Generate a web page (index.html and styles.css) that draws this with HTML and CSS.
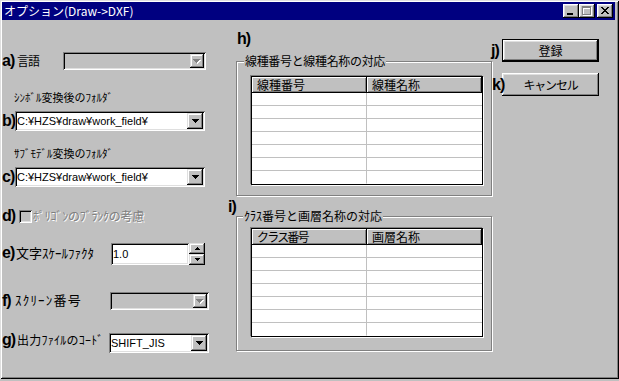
FILE: index.html
```html
<!DOCTYPE html>
<html lang="ja">
<head>
    <meta charset="UTF-8">
    <meta name="viewport" content="width=device-width, initial-scale=1.0">
    <title>オプション(Draw-&gt;DXF)</title>
    <link rel="stylesheet" href="styles.css">
</head>
<body>
    <div class="window">
        <div class="titlebar">
            <span class="title">オプション(Draw-&gt;DXF)</span>
            <div class="caption-buttons">
                <button class="cap-btn" title="最小化">
                    <svg width="16" height="14" viewBox="0 0 16 14"><rect x="4" y="9" width="6" height="2" fill="#000"/></svg>
                </button>
                <button class="cap-btn" title="最大化">
                    <svg width="16" height="14" viewBox="0 0 16 14">
                        <path d="M4 3h9v9h-9z M5 5v6h7v-6z" fill="#fff" fill-rule="evenodd"/>
                        <path d="M3 2h9v9h-9z M4 4v6h7v-6z" fill="#808080" fill-rule="evenodd"/>
                    </svg>
                </button>
                <button class="cap-btn close" title="閉じる">
                    <svg width="16" height="14" viewBox="0 0 16 14">
                        <g fill="#000" transform="translate(4 3)">
                            <rect x="0" y="0" width="2" height="1"/><rect x="6" y="0" width="2" height="1"/>
                            <rect x="1" y="1" width="2" height="1"/><rect x="5" y="1" width="2" height="1"/>
                            <rect x="2" y="2" width="4" height="1"/>
                            <rect x="3" y="3" width="2" height="1"/>
                            <rect x="2" y="4" width="4" height="1"/>
                            <rect x="1" y="5" width="2" height="1"/><rect x="5" y="5" width="2" height="1"/>
                            <rect x="0" y="6" width="2" height="1"/><rect x="6" y="6" width="2" height="1"/>
                        </g>
                    </svg>
                </button>
            </div>
        </div>

        <div class="dialog">
            <!-- left: settings -->
            <div class="col-left">
                <div class="row row-lang">
                    <span class="tag tag-a">a)</span>
                    <span class="label lbl-lang">言語</span>
                    <div class="combo small disabled combo-lang">
                        <span class="combo-text"></span>
                        <span class="drop"><svg width="8" height="5" viewBox="0 0 8 5"><path d="M1 1h7v1h-1v1h-1v1h-1v1h-1v-1h-1v-1h-1v-1h-1z" fill="#fff"/><path d="M0 0h7v1h-1v1h-1v1h-1v1h-1v-1h-1v-1h-1v-1h-1z" fill="#808080"/></svg></span>
                    </div>
                </div>

                <div class="caption caption-symbol">ｼﾝﾎﾞﾙ変換後のﾌｫﾙﾀﾞ</div>
                <div class="row row-symbol">
                    <span class="tag tag-b">b)</span>
                    <div class="combo combo-folder">
                        <span class="combo-text">C:¥HZS¥draw¥work_field¥</span>
                        <span class="drop"><svg width="7" height="4" viewBox="0 0 7 4"><path d="M0 0h7v1h-1v1h-1v1h-1v1h-1v-1h-1v-1h-1v-1h-1z" fill="#000"/></svg></span>
                    </div>
                </div>

                <div class="caption caption-submodel">ｻﾌﾞﾓﾃﾞﾙ変換のﾌｫﾙﾀﾞ</div>
                <div class="row row-submodel">
                    <span class="tag tag-b">c)</span>
                    <div class="combo combo-folder">
                        <span class="combo-text">C:¥HZS¥draw¥work_field¥</span>
                        <span class="drop"><svg width="7" height="4" viewBox="0 0 7 4"><path d="M0 0h7v1h-1v1h-1v1h-1v1h-1v-1h-1v-1h-1v-1h-1z" fill="#000"/></svg></span>
                    </div>
                </div>

                <div class="row row-polygon">
                    <span class="tag tag-d">d)</span>
                    <span class="check"></span>
                    <span class="label lbl-polygon disabled-text">ﾎﾟﾘｺﾞﾝのﾌﾞﾗﾝｸの考慮</span>
                </div>

                <div class="row row-scale">
                    <span class="tag tag-e">e)</span>
                    <span class="label lbl-scale">文字ｽｹｰﾙﾌｧｸﾀ</span>
                    <div class="spin">
                        <span class="spin-edit">1.0</span>
                        <div class="spin-buttons">
                            <span class="spin-btn"><svg width="5" height="3" viewBox="0 0 5 3"><path d="M2 0h1v1h1v1h1v1h-5v-1h1v-1h1z" fill="#000"/></svg></span>
                            <span class="spin-btn"><svg width="5" height="3" viewBox="0 0 5 3"><path d="M0 0h5v1h-1v1h-1v1h-1v-1h-1v-1h-1z" fill="#000"/></svg></span>
                        </div>
                    </div>
                </div>

                <div class="row row-screen">
                    <span class="tag tag-f">f)</span>
                    <span class="label lbl-screen">ｽｸﾘｰﾝ番号</span>
                    <div class="combo small disabled combo-screen">
                        <span class="combo-text"></span>
                        <span class="drop"><svg width="8" height="5" viewBox="0 0 8 5"><path d="M1 1h7v1h-1v1h-1v1h-1v1h-1v-1h-1v-1h-1v-1h-1z" fill="#fff"/><path d="M0 0h7v1h-1v1h-1v1h-1v1h-1v-1h-1v-1h-1v-1h-1z" fill="#808080"/></svg></span>
                    </div>
                </div>

                <div class="row row-code">
                    <span class="tag tag-a">g)</span>
                    <span class="label lbl-code">出力ﾌｧｲﾙのｺｰﾄﾞ</span>
                    <div class="combo combo-code">
                        <span class="combo-text">SHIFT_JIS</span>
                        <span class="drop"><svg width="7" height="4" viewBox="0 0 7 4"><path d="M0 0h7v1h-1v1h-1v1h-1v1h-1v-1h-1v-1h-1v-1h-1z" fill="#000"/></svg></span>
                    </div>
                </div>
            </div>

            <!-- middle: mapping tables -->
            <div class="col-mid">
                <div class="tag tag-h">h)</div>
                <div class="group group-line">
                    <span class="group-title title-line">線種番号と線種名称の対応</span>
                    <table class="grid">
                        <thead>
                            <tr><th>線種番号</th><th>線種名称</th></tr>
                        </thead>
                        <tbody>
                            <tr><td></td><td></td></tr>
                            <tr><td></td><td></td></tr>
                            <tr><td></td><td></td></tr>
                            <tr><td></td><td></td></tr>
                            <tr><td></td><td></td></tr>
                            <tr><td></td><td></td></tr>
                            <tr><td></td><td></td></tr>
                        </tbody>
                    </table>
                </div>

                <div class="tag tag-i">i)</div>
                <div class="group group-layer">
                    <span class="group-title title-layer">ｸﾗｽ番号と画層名称の対応</span>
                    <table class="grid">
                        <thead>
                            <tr><th class="th-class">クラス番号</th><th>画層名称</th></tr>
                        </thead>
                        <tbody>
                            <tr><td></td><td></td></tr>
                            <tr><td></td><td></td></tr>
                            <tr><td></td><td></td></tr>
                            <tr><td></td><td></td></tr>
                            <tr><td></td><td></td></tr>
                            <tr><td></td><td></td></tr>
                            <tr><td></td><td></td></tr>
                        </tbody>
                    </table>
                </div>
            </div>

            <!-- right: buttons -->
            <div class="col-right">
                <div class="row row-ok">
                    <span class="tag tag-j">j)</span>
                    <button class="btn default">登録</button>
                </div>
                <div class="row row-cancel">
                    <span class="tag tag-k">k)</span>
                    <button class="btn btn-cancel">キャンセル</button>
                </div>
            </div>
        </div>
    </div>
</body>
</html>
```

FILE: styles.css
```css
/* Basic styling */
body {
    margin: 0;
    padding: 0;
    background-color: #c0c0c0;
    font-family: "Noto Sans CJK JP", "Noto Sans", sans-serif;
    font-size: 12px;
    color: #000;
}

.window {
    width: 619px;
    height: 379px;
    box-sizing: border-box;
    padding: 2px 4px 3px 2px;
    background-color: #c0c0c0;
    box-shadow: inset 1px 1px #dfdfdf, inset -1px -1px #000, inset 2px 2px #fff, inset -2px -2px #808080;
    display: flex;
    flex-direction: column;
}

/* title bar */
.titlebar {
    height: 18px;
    background-color: #000080;
    color: #fff;
    display: flex;
    align-items: center;
    justify-content: space-between;
    padding: 0 2px;
}

.title {
    line-height: 18px;
    white-space: nowrap;
}

.caption-buttons {
    display: flex;
}

.cap-btn {
    width: 16px;
    height: 14px;
    padding: 0;
    border: none;
    background-color: #c0c0c0;
    box-shadow: inset -1px -1px #000, inset 1px 1px #fff, inset -2px -2px #808080, inset 2px 2px #dfdfdf;
    display: block;
}

.cap-btn svg {
    display: block;
}

.cap-btn.close {
    margin-left: 2px;
}

/* dialog body */
.dialog {
    flex: 1;
    display: flex;
}

.col-left {
    width: 226px;
    display: flex;
    flex-direction: column;
    align-items: flex-start;
}

.col-mid {
    width: 262px;
}

.col-right {
    flex: 1;
}

.row {
    display: flex;
    align-items: center;
}

.tag {
    font-family: "Liberation Sans", Arial, sans-serif;
    font-weight: bold;
    font-size: 16px;
    letter-spacing: -1px;
    line-height: 16px;
    white-space: nowrap;
}

.tag-a { width: 15px; }
.tag-b { width: 13px; }
.tag-d { width: 17px; }
.tag-e { width: 14px; }
.tag-f { width: 13px; }

.label {
    line-height: 14px;
    white-space: nowrap;
}

.caption {
    font-size: 11px;
    line-height: 14px;
    margin-left: 12px;
    white-space: nowrap;
}

.disabled-text {
    color: #808080;
    text-shadow: 1px 1px 0 #fff;
}

.lbl-lang { width: 46px; letter-spacing: -1px; }
.lbl-polygon { margin-left: 1px; letter-spacing: -0.25px; }
.lbl-scale { width: 95px; font-size: 13px; margin-top: -3px; }
.lbl-screen { width: 95px; font-size: 13px; letter-spacing: 1.2px; margin-top: -2px; }
.lbl-code { width: 92px; letter-spacing: 0.25px; margin-top: -6px; }

/* vertical spacing of the left column */
.row-lang { margin-top: 32px; height: 18px; }
.caption-symbol { margin-top: 20px; }
.row-symbol { margin-top: 7px; height: 20px; }
.caption-submodel { margin-top: 15px; }
.row-submodel { margin-top: 7px; height: 20px; }
.row-polygon { margin-top: 22px; height: 14px; }
.row-scale { margin-top: 20px; height: 22px; }
.row-screen { margin-top: 27px; height: 18px; }
.row-code { margin-top: 23px; height: 20px; }

.row-scale .tag { margin-top: -3px; }
.row-code .tag { margin-top: -6px; }

/* combo boxes */
.combo {
    height: 20px;
    box-sizing: border-box;
    padding: 2px;
    display: flex;
    background-color: #fff;
    box-shadow: inset 1px 1px #808080, inset -1px -1px #fff, inset 2px 2px #000, inset -2px -2px #dfdfdf;
}

.combo.small {
    height: 18px;
}

.combo.disabled {
    background-color: #c0c0c0;
}

.combo-text {
    flex: 1;
    font-family: "Liberation Sans", Arial, sans-serif;
    font-size: 11px;
    line-height: 16px;
    white-space: nowrap;
    overflow: hidden;
}

.drop {
    width: 16px;
    background-color: #c0c0c0;
    box-shadow: inset -1px -1px #000, inset 1px 1px #dfdfdf, inset -2px -2px #808080, inset 2px 2px #fff;
    display: flex;
    align-items: center;
    justify-content: center;
}

.combo.small .drop {
    width: 14px;
}

.drop svg {
    display: block;
}

.combo-lang { width: 143px; }
.combo-folder { width: 190px; }
.combo-screen { width: 99px; }
.combo-code { width: 100px; }

/* checkbox */
.check {
    width: 13px;
    height: 13px;
    box-sizing: border-box;
    background-color: #c0c0c0;
    box-shadow: inset 1px 1px #808080, inset -1px -1px #fff, inset 2px 2px #000, inset -2px -2px #dfdfdf;
}

/* spin edit */
.spin {
    display: flex;
    height: 22px;
}

.spin-edit {
    width: 78px;
    height: 22px;
    box-sizing: border-box;
    padding-left: 2px;
    background-color: #fff;
    box-shadow: inset 1px 1px #808080, inset -1px -1px #fff, inset 2px 2px #000, inset -2px -2px #dfdfdf;
    font-family: "Liberation Sans", Arial, sans-serif;
    font-size: 11px;
    line-height: 22px;
}

.spin-buttons {
    width: 16px;
    display: flex;
    flex-direction: column;
}

.spin-btn {
    height: 11px;
    background-color: #c0c0c0;
    box-shadow: inset -1px -1px #000, inset 1px 1px #dfdfdf, inset -2px -2px #808080, inset 2px 2px #fff;
    display: flex;
    align-items: center;
    justify-content: center;
}

.spin-btn svg {
    display: block;
}

/* group boxes */
.tag-h {
    margin-top: 11px;
    padding-left: 9px;
}

.tag-i {
    margin-top: 3px;
}

.group {
    position: relative;
    width: 256px;
    box-sizing: border-box;
    margin-left: 8px;
    border: 1px solid #808080;
    box-shadow: inset 1px 1px #fff, 1px 1px #fff;
}

.group-line {
    margin-top: 14px;
    padding: 14px 0 10px 14px;
}

.group-layer {
    margin-top: 1px;
    padding: 11px 0 13px 14px;
}

.group-title {
    position: absolute;
    top: -8px;
    padding: 0 1px;
    background-color: #c0c0c0;
    line-height: 14px;
    white-space: nowrap;
}

.title-line {
    left: 7px;
    letter-spacing: -0.33px;
}

.title-layer {
    left: 6px;
}

/* list tables */
.grid {
    width: 232px;
    table-layout: fixed;
    border-collapse: separate;
    border-spacing: 0;
    background-color: #fff;
    border: 1px solid #000;
    box-shadow: -1px -1px 0 #808080, 1px 1px 0 #fff;
}

.grid th {
    height: 15px;
    padding: 1px 0 0 5px;
    box-sizing: border-box;
    text-align: left;
    font-weight: normal;
    font-size: 12px;
    line-height: 14px;
    background-color: #c0c0c0;
    border-right: 1px solid #000;
    border-bottom: 1px solid #000;
    box-shadow: inset 1px 1px #fff, inset -1px -1px #808080;
    white-space: nowrap;
    overflow: hidden;
}

.grid th.th-class {
    letter-spacing: -1.8px;
}

.grid td {
    height: 12px;
    padding: 0;
    border-right: 1px solid #c0c0c0;
    border-bottom: 1px solid #c0c0c0;
}

.grid td:last-child {
    border-right: none;
}

.grid tr:last-child td {
    border-bottom-color: #fff;
}

/* buttons */
.row-ok {
    margin-top: 19px;
}

.row-cancel {
    margin-top: 11px;
}

.tag-j,
.tag-k {
    width: 12px;
    padding-left: 1px;
    box-sizing: border-box;
    position: relative;
    z-index: 1;
}

.tag-k {
    padding-left: 2px;
}

.btn {
    width: 97px;
    height: 23px;
    box-sizing: border-box;
    padding: 0;
    border: none;
    background-color: #c0c0c0;
    box-shadow: inset -1px -1px #000, inset 1px 1px #fff, inset -2px -2px #808080, inset 2px 2px #dfdfdf;
    font-family: "Noto Sans CJK JP", "Noto Sans", sans-serif;
    font-size: 12px;
    color: #000;
}

.btn.default {
    border: 1px solid #000;
}

.btn-cancel {
    letter-spacing: -1.2px;
}
```
